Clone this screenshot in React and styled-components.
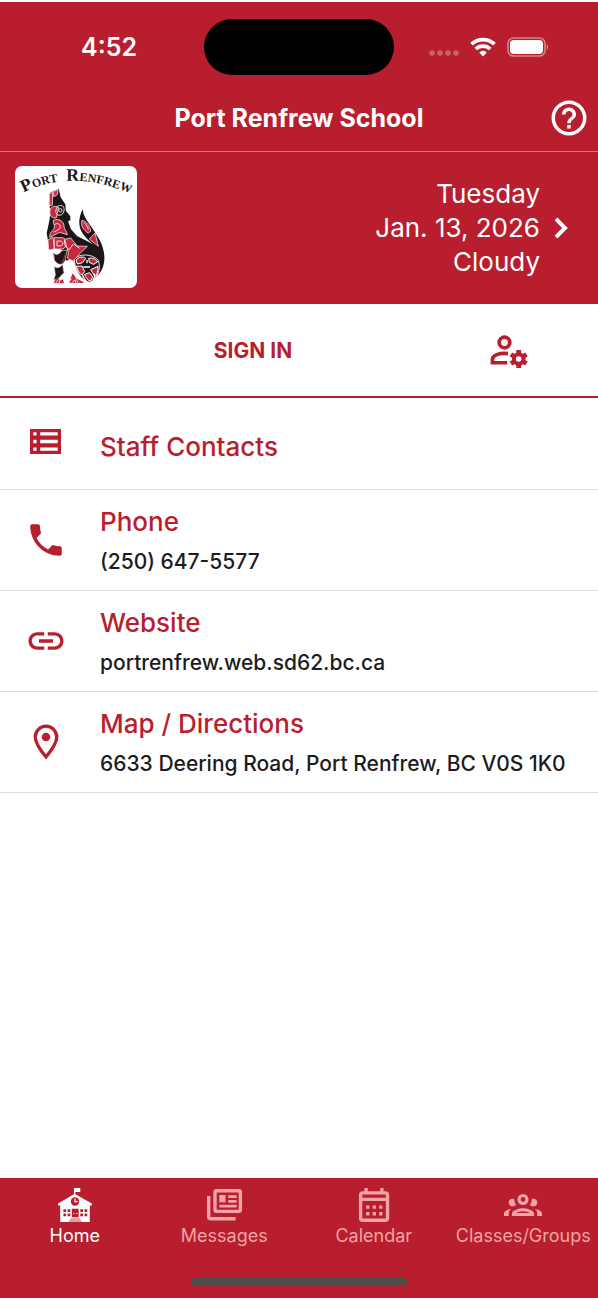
import React from 'react'
import styled, { createGlobalStyle } from 'styled-components'
import { MdHelpOutline, MdLink, MdPhone } from 'react-icons/md'

const contacts = [
    { id: 'phone', title: 'Phone', text: '(250) 647-5577', href: 'tel:2506475577', icon: <MdPhone /> },
    { id: 'website', title: 'Website', text: 'portrenfrew.web.sd62.bc.ca', href: '#website', icon: <MdLink /> },
    { id: 'map', title: 'Map / Directions', text: '6633 Deering Road, Port Renfrew, BC V0S 1K0', href: '#map', icon: <PinIcon /> },
]

const tabs = [
    { id: 'home', label: 'Home', icon: <SchoolIcon />, active: true },
    { id: 'messages', label: 'Messages', icon: <NewsIcon /> },
    { id: 'calendar', label: 'Calendar', icon: <CalendarIcon /> },
    { id: 'groups', label: 'Classes/Groups', icon: <GroupsIcon /> },
]

export default function App() {
    return (
        <Page>
            <GlobalStyle />
            <StatusBar>
                <Time>4:52</Time>
                <Island />
                <StatusIcons>
                    <SignalIcon />
                    <WifiIcon />
                    <BatteryIcon />
                </StatusIcons>
            </StatusBar>
            <TitleBar>
                <Title>Port Renfrew School</Title>
                <HelpButton aria-label="Help"><MdHelpOutline /></HelpButton>
            </TitleBar>
            <Banner>
                <SchoolLogo />
                <Today href="#today">
                    <span>Tuesday<br />Jan. 13, 2026<br />Cloudy</span>
                    <svg width="16" height="24" viewBox="0 0 16 24" fill="none" stroke="currentColor" strokeWidth="4">
                        <path d="M1 3l9 9-9 9" />
                    </svg>
                </Today>
            </Banner>
            <Account>
                <SignIn>SIGN IN</SignIn>
                <AccountSettings aria-label="Account settings"><AccountIcon /></AccountSettings>
            </Account>
            <main>
                <Row href="#staff" $single>
                    <RowIcon><ListIcon /></RowIcon>
                    <RowBody>
                        <RowTitle>Staff Contacts</RowTitle>
                    </RowBody>
                </Row>
                {contacts.map(item =>
                    <Row href={item.href} key={item.id}>
                        <RowIcon>{item.icon}</RowIcon>
                        <RowBody>
                            <RowTitle>{item.title}</RowTitle>
                            <RowText>{item.text}</RowText>
                        </RowBody>
                    </Row>
                )}
            </main>
            <Bottom>
                <Tabs>
                    {tabs.map(tab =>
                        <Tab href={`#${tab.id}`} key={tab.id} $active={tab.active}>
                            {tab.icon}
                            {tab.label}
                        </Tab>
                    )}
                </Tabs>
                <HomeIndicator />
            </Bottom>
        </Page>
    )
}

function SignalIcon() {
    return (
        <svg width="30" height="18" viewBox="0 0 30 18" fill="#fff" opacity=".3">
            <circle cx="3" cy="15" r="2.800" />
            <circle cx="11" cy="15" r="2.800" />
            <circle cx="19" cy="15" r="2.800" />
            <circle cx="27" cy="15" r="2.800" />
        </svg>
    )
}

function WifiIcon() {
    return (
        <svg width="26" height="20" viewBox="0 0 26 20" fill="none" stroke="#fff" strokeWidth="3.800">
            <path d="M1.500 7.200a16.500 16.500 0 0 1 23 0" />
            <path d="M5.800 12a10.300 10.300 0 0 1 14.400 0" />
            <path d="M13 19.400l-3.800-4a5.400 5.400 0 0 1 7.600 0z" fill="#fff" stroke="none" />
        </svg>
    )
}

function BatteryIcon() {
    return (
        <svg width="42" height="20" viewBox="0 0 42 20">
            <rect x="1" y="1" width="37" height="18" rx="5.500" fill="none" stroke="#fff" strokeOpacity=".45" strokeWidth="1.600" />
            <rect x="3" y="3" width="33" height="14" rx="4" fill="#fff" />
            <path d="M39.800 7.200c1.600.6 1.600 5 0 5.600z" fill="#fff" opacity=".55" />
        </svg>
    )
}

function AccountIcon() {
    return (
        <svg width="38" height="33" viewBox="0 0 38 33" fill="none" stroke="currentColor">
            <circle cx="14.500" cy="7.500" r="5.300" strokeWidth="3.800" />
            <path d="M18 18.600C9 17.500 2.400 20.500 2.400 24.500v3.300h14.800" strokeWidth="3.600" />
            <circle cx="28.700" cy="24" r="4.800" strokeWidth="4" />
            <path d="M28.700 15v4M28.700 29v4M20.900 19.500l3.500 2M33 26.500l3.500 2M20.900 28.500l3.500-2M33 21.500l3.500-2" strokeWidth="4.800" />
        </svg>
    )
}

function ListIcon() {
    return (
        <svg width="32" height="26" viewBox="0 0 32 26">
            <path
                fill="currentColor"
                fillRule="evenodd"
                d="M0 0h31v25H0zM3.300 3.200v3.300h3.300V3.200zM10.200 3.200v3.300h17.500V3.200zM3.300 10.800v3.400h3.300v-3.400zM10.200 10.800v3.400h17.500v-3.400zM3.300 18.500v3.300h3.300v-3.300zM10.200 18.500v3.300h17.500v-3.300z"
            />
        </svg>
    )
}

function PinIcon() {
    return (
        <svg width="26" height="36" viewBox="0 0 26 36">
            <path d="M13 2.200a10.700 10.700 0 0 0-10.700 10.700C2.300 20 8.500 27.500 13 33c4.500-5.500 10.700-13 10.700-20.100A10.700 10.700 0 0 0 13 2.200z" fill="none" stroke="currentColor" strokeWidth="3.300" />
            <circle cx="13" cy="13" r="4.300" fill="currentColor" />
        </svg>
    )
}

function SchoolIcon() {
    return (
        <svg viewBox="0 0 36 36">
            <path fill="currentColor" d="M17 2h6v3.600h-4.700v2.200L34 16.600v1.900h-2V34H4V18.500H2v-1.900L17 7.800z" />
            <circle cx="18" cy="14.600" r="4" fill="#b81e2d" />
            <path d="M18 11.800v3h2.600" fill="none" stroke="currentColor" strokeWidth="1.200" />
            <path fill="#b81e2d" d="M7 22h2.600v2.600H7zM11 22h2.600v2.600H11zM7 26h2.600v2.600H7zM11 26h2.600v2.600H11zM23 22h2.600v2.600H23zM27 22h2.600v2.600H27zM23 26h2.600v2.600H23zM27 26h2.600v2.600H27zM15 21.500h6.500v8H15z" />
            <path fill="#dda0a5" d="M14.600 30h7.200l3 4H11.600z" />
            <path d="M16.300 26h1.300M19 26h1.300" stroke="currentColor" strokeWidth=".8" />
        </svg>
    )
}

function NewsIcon() {
    return (
        <svg viewBox="0 0 36 36" fill="none" stroke="currentColor">
            <rect x="9.500" y="4.500" width="24" height="19.500" rx="1.500" strokeWidth="3.200" />
            <path d="M3.500 9.500v20a1.500 1.500 0 0 0 1.500 1.500h24" strokeWidth="3.200" />
            <path d="M13.500 8.500h6v7h-6z" fill="currentColor" stroke="none" />
            <path d="M22 10h8M22 14.500h8M13.500 19h16.500" strokeWidth="2.600" />
        </svg>
    )
}

function CalendarIcon() {
    return (
        <svg viewBox="0 0 36 36" fill="none" stroke="currentColor">
            <rect x="5.300" y="6.500" width="25.500" height="26" rx="2" strokeWidth="3.200" />
            <path d="M10.500 2v5M25.500 2v5M5.300 12.700h25.500" strokeWidth="3.200" />
            <path d="M10.500 20h15.500M10.500 26.300h15.500" strokeWidth="3.200" strokeDasharray="3.200 3" />
        </svg>
    )
}

function GroupsIcon() {
    return (
        <svg viewBox="0 0 24 24" fill="currentColor">
            <path d="M12 5a3.500 3.500 0 1 0 0 7 3.500 3.500 0 0 0 0-7m0 2a1.500 1.500 0 1 1 0 3 1.500 1.500 0 0 1 0-3M5.500 8A2.500 2.500 0 0 0 3 10.500c0 .94.53 1.750 1.290 2.180.36.2.77.32 1.210.32s.85-.12 1.210-.32c.37-.21.68-.51.91-.87A5.420 5.420 0 0 1 6.500 8.500v-.28c-.3-.14-.64-.22-1-.22m13 0c-.36 0-.7.08-1 .22v.28c0 1.200-.39 2.360-1.120 3.310.12.19.25.34.4.49.16.15.32.28.51.38.36.2.77.32 1.210.32s.85-.12 1.210-.32c.76-.43 1.290-1.240 1.290-2.180A2.500 2.500 0 0 0 18.500 8M12 14c-2.340 0-7 1.170-7 3.500V19h14v-1.500c0-2.330-4.660-3.500-7-3.500m-7.290.55C2.780 14.780 0 15.760 0 17.500V19h3v-1.930c0-1.010.69-1.850 1.710-2.520m14.580 0c1.020.67 1.710 1.510 1.710 2.520V19h3v-1.500c0-1.740-2.780-2.720-4.710-2.950M12 16c1.530 0 3.240.5 4.230 1H7.770c.99-.5 2.700-1 4.230-1" />
        </svg>
    )
}

function SchoolLogo() {
    return (
        <LogoSvg viewBox="17 18 366 366" role="img" aria-label="Port Renfrew">
            <path id="logo-arc" d="M43 98Q196 18 396 116" fill="none" />
            <LogoText>
                <textPath href="#logo-arc">Port</textPath>
            </LogoText>
            <LogoText>
                <textPath href="#logo-arc" startOffset="134">Renfrew</textPath>
            </LogoText>

            {/* head, neck and back */}
            <path fill="#1b1718" d="M121 99l27-13 6 26 14 21 2 20 13 16v12l-7 3 9 24 18 20 34 17 28 17 13 23-1 34-16 28-21 10-28-14-23-34-25-8 1-26-20-13-26-4-7-38 9-42 2-23-3-24z" />
            {/* tail */}
            <path fill="#1b1718" d="M220 148c-12 24-14 48-3 67 14 25 36 35 51 61 6 20 4 43-4 72 21-22 25-51 18-79-7-29-23-47-37-70-14-20-23-31-25-51z" />
            <g fill="#c4293d" stroke="#f6dde0" strokeWidth="2.500" strokeLinejoin="round">
                <path d="M120 101l10-4-1 38-8 3zM133 95l13-7-2 16-11 6z" />
                <path d="M122 151c2-12 17-15 26-9l-7 31c-14 4-22-8-19-22z" />
                <path d="M132 181c15-7 32 2 32 18 0 9 9 16 10 25l-23-7-30 15c0-18 12-20 14-29 2-10-5-13-3-22z" />
                <path d="M116 240l15-9 4 36-17 3zM135 233h24c17 3 16 29 1 34h-25z" />
                <path d="M166 238l18-4 20 24 30 1-25 24-12 22-22-9 2-18z" />
                <path d="M218 181c12 2 25 17 26 33l-7 5c-16-9-23-21-19-38z" />
                <path d="M240 237l17-18 10 40z" />
            </g>
            <g fill="none" stroke="#f6dde0" strokeWidth="3">
                <ellipse cx="152" cy="151" rx="12" ry="15" transform="rotate(20 152 151)" />
                <circle cx="153" cy="151" r="5" />
                <path d="M134 195c12-11 24 2 17 11-7 5-14 10-19 10M143 243h9c12 1 10 14 0 15h-9zM166 240c-2 15 4 24 14 29l11-16M193 252l18 13M224 188c7 6 12 14 13 21" />
            </g>
            {/* forelegs */}
            <path fill="#fff" d="M128 279l14-3 16 10-14 17-13-10zM132 317l18-9 15 12 4 40-35 3 7-23z" />
            <path fill="#fff" d="M166 302l18-3 22 13-7 42-34-4z" />
            <path fill="#1b1718" stroke="#f6dde0" strokeWidth="2" d="M132 276c7 12 15 9 27-5h14l-6 32c-10 16-22 12-32-2zM134 318c8 8 16 7 26-5l4 25-17 18-14 4 5-16z" />
            <path fill="#c4293d" d="M132 279l6 10-3 8zM169 276l-5 26-12 10 9-13zM137 360l9-8 5 10 10-4 3 12h-31zM180 369c3-11 12-18 20-15 8 7 20 8 24 15zM190 340l10 13-17 4z" />
            <path fill="none" stroke="#fff" strokeWidth="2.500" d="M139 369l8-10M149 370l2-8M187 368l10-8 3 10M207 368l-8-13" />
            {/* haunch */}
            <path fill="#1b1718" stroke="#f6dde0" strokeWidth="3" d="M195 299c13-20 55-18 72 2 9 26-2 55-25 66-24-5-44-31-47-68z" />
            <g fill="#c4293d" stroke="#fff" strokeWidth="3">
                <path d="M200 300c7-9 22-12 29-5l-9 13-16 4zM238 295c12-3 22 3 27 11l-13 7-12-6zM201 319l17-1 8 17-9 10c-7-6-13-15-16-26zM244 329l22-10c1 14-4 26-9 31zM226 343l15-5 9 12-6 13c-9-2-15-10-18-20z" />
            </g>
            <path fill="none" stroke="#fff" strokeWidth="4" d="M219 343c2 9 7 16 12 20M255 341c3 7-1 15-5 20M233 300v10M222 321h20" />
        </LogoSvg>
    )
}

const red = '#b81e2d'

const GlobalStyle = createGlobalStyle`
* {
    box-sizing: border-box;
}
body {
    margin: 0;
    background: #fff;
    color: #1c1c1e;
    font-family: Inter, "Liberation Sans", sans-serif;
}
button {
    display: flex;
    align-items: center;
    justify-content: center;
    padding: 0;
    border: 0;
    background: none;
    color: inherit;
    font: inherit;
    cursor: pointer;
}
a {
    color: inherit;
    text-decoration: none;
}
svg {
    flex-shrink: 0;
}
`

const Page = styled.div`
display: flex;
flex-direction: column;
min-height: 100vh;
padding: 2px 0;
main {
    flex: 1;
}
`

const StatusBar = styled.div`
display: grid;
grid-template-columns: 1fr 190px 1fr;
align-items: center;
height: 90px;
background: ${red};
color: #fff;
`

const Time = styled.span`
padding-left: 14px;
font-size: 25px;
font-weight: 600;
text-align: center;
`

const Island = styled.div`
height: 56px;
border-radius: 28px;
background: #000;
`

const StatusIcons = styled.div`
display: flex;
align-items: center;
justify-content: flex-end;
gap: 11px;
padding-right: 49px;
`

const TitleBar = styled.header`
display: grid;
grid-template-columns: 1fr auto 1fr;
align-items: center;
height: 60px;
padding: 0 8px 8px;
border-bottom: 1px solid #d0747d;
background: ${red};
color: #fff;
`

const Title = styled.h1`
grid-column: 2;
margin: 0;
font-size: 25px;
font-weight: 700;
`

const HelpButton = styled.button`
justify-self: end;
font-size: 42px;
`

const Banner = styled.section`
display: flex;
align-items: center;
justify-content: space-between;
padding: 14px 27px 16px 15px;
background: ${red};
color: #fff;
`

const LogoSvg = styled.svg`
width: 122px;
height: 122px;
border-radius: 7px;
background: #fff;
`

const LogoText = styled.text`
fill: #1b1718;
font-family: "Liberation Serif", serif;
font-size: 53px;
font-variant: small-caps;
font-weight: 700;
`

const Today = styled.a`
display: flex;
align-items: center;
gap: 15px;
padding-top: 2px;
font-size: 26px;
line-height: 34px;
text-align: right;
`

const Account = styled.section`
display: grid;
grid-template-columns: 1fr 178px;
height: 94px;
padding-left: 86px;
border-bottom: 2px solid ${red};
color: ${red};
`

const SignIn = styled.button`
&& {
    font-size: 21px;
    font-weight: 700;
}
`

const AccountSettings = styled.button`
padding-top: 2px;
`

const Row = styled.a`
display: flex;
align-items: center;
min-height: ${props => props.$single ? '92px' : '101px'};
border-bottom: 1px solid #dedede;
/* a row with a title only keeps its icon a little above the text */
> span {
    padding-bottom: ${props => props.$single ? '4px' : '0'};
}
> div {
    padding-top: ${props => props.$single ? '6px' : '4px'};
}
`

const RowIcon = styled.span`
display: flex;
justify-content: center;
width: 100px;
padding-right: 8px;
color: ${red};
font-size: 42px;
`

const RowBody = styled.div`
line-height: 40px;
`

const RowTitle = styled.div`
color: ${red};
font-size: 26px;
font-weight: 500;
`

const RowText = styled.div`
font-size: 21px;
font-weight: 500;
`

const Bottom = styled.footer`
height: 120px;
padding-top: 8px;
background: ${red};
`

const Tabs = styled.nav`
display: grid;
grid-template-columns: repeat(4, 1fr);
`

const Tab = styled.a`
display: flex;
flex-direction: column;
align-items: center;
color: ${props => props.$active ? '#fff' : '#f0a3a6'};
font-size: 18px;
line-height: 24px;
svg {
    width: 38px;
    height: 38px;
}
`

const HomeIndicator = styled.div`
width: 36%;
height: 8px;
margin: 30px auto 0;
border-radius: 4px;
background: #4e4e4e;
`
